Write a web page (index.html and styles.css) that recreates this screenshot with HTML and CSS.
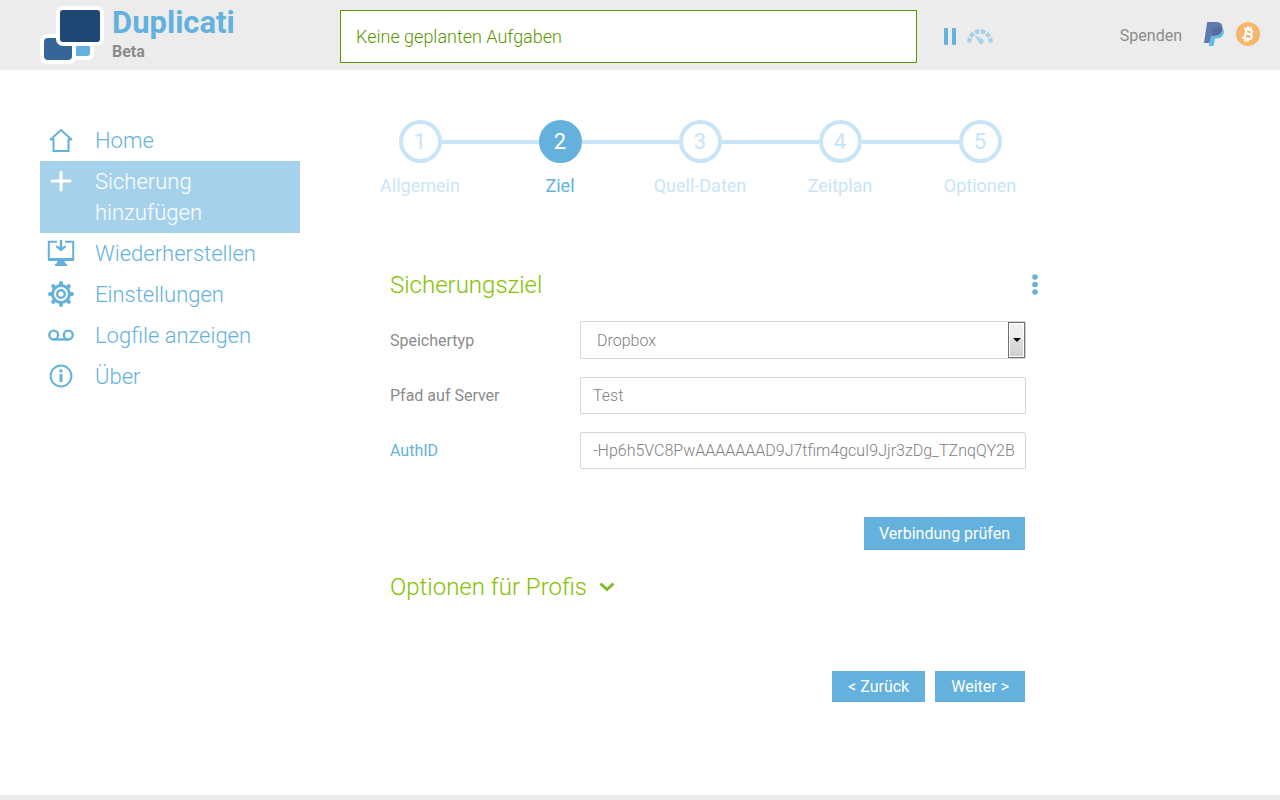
FILE: index.html
```html
<!DOCTYPE html>
<html lang="de">
<head>
<meta charset="utf-8">
<meta name="viewport" content="width=device-width, initial-scale=1">
<title>Duplicati</title>
<link rel="stylesheet" href="styles.css">
</head>
<body>
<header class="header">
  <a class="brand" href="#">
    <svg class="brand-logo" width="64" height="58" viewBox="0 0 64 58" aria-hidden="true">
      <rect x="28" y="30" width="26" height="24" rx="6" fill="#fff"/>
      <rect x="32" y="34" width="18" height="16" rx="3" fill="#65b1dd"/>
      <rect x="0" y="28" width="36" height="30" rx="7" fill="#fff"/>
      <rect x="4" y="32" width="28" height="22" rx="4" fill="#356697"/>
      <rect x="16" y="0" width="48" height="40" rx="7" fill="#fff"/>
      <rect x="20" y="4" width="40" height="32" rx="3" fill="#1e4773"/>
    </svg>
    <span class="brand-text">
      <span class="brand-name">Duplicati</span>
      <span class="brand-version">Beta</span>
    </span>
  </a>
  <div class="status">Keine geplanten Aufgaben</div>
  <div class="actions">
    <button class="icon-button" type="button" aria-label="Pause">
      <svg width="12" height="17" viewBox="0 0 12 17" fill="#65b1dd"><rect width="4" height="17" rx="1"/><rect x="8" width="4" height="17" rx="1"/></svg>
    </button>
    <button class="icon-button" type="button" aria-label="Drosseln">
      <svg width="26" height="15" viewBox="0 0 26 15">
        <path d="M2.300 13.500V13A10.700 10.700 0 0 1 23.700 13V13.500" fill="none" stroke="#a5d1eb" stroke-width="4.400" stroke-dasharray="4.500 1.520"/>
        <path d="M8 6.300 15.300 10A2.700 2.700 0 1 1 11.300 12.800z" fill="#a5d1eb"/>
      </svg>
    </button>
  </div>
  <div class="donate">
    <span class="donate-label">Spenden</span>
    <a class="icon-button" href="#" aria-label="PayPal">
      <svg width="20" height="24" viewBox="0 0 20 24">
        <path d="M17.500 5.500C20 7 20.500 10 19 13c-1.200 2.600-3.500 3.500-6.500 3.500H11L9.700 24H4.800L7 11z" fill="#62bde5"/>
        <path d="M3.200 0H12c5 0 7.200 2.900 6.200 7.300-1 4.500-3.700 6.300-7.700 6.300H7.200L5.300 21H0z" fill="#5f78ae"/>
        <path d="M8.500 5.700h8.700c.6.300 1 .6 1.100 1-.8 4.900-3.600 6.900-7.800 6.900H7.200z" fill="#5a6a9f"/>
      </svg>
    </a>
    <a class="icon-button" href="#" aria-label="Bitcoin">
      <svg width="24" height="24" viewBox="0 0 24 24">
        <circle cx="12" cy="12" r="12" fill="#f5b66e"/>
        <g transform="rotate(13 12 12)" fill="none" stroke="#fff" stroke-width="2">
          <path d="M7 7.500h5.500c4 0 4 4.300 0 4.300H9.500h3.500c4.500 0 4.500 4.900 0 4.900H7M9.500 7.500v9M10.500 4.500v3M13.300 4.500v3M10.500 16.700v3M13.300 16.700v3"/>
        </g>
      </svg>
    </a>
  </div>
</header>

<div class="page">
  <nav class="menu">
    <a class="menu-item" href="#">
      <svg class="menu-icon" viewBox="0 0 28 28" fill="none" stroke="#65b1dd" stroke-width="2"><path d="M3 14 14 4l11 10M3 13.500h3.500V25h15V13.500H25"/></svg>
      <span>Home</span>
    </a>
    <a class="menu-item active" href="#">
      <svg class="menu-icon" viewBox="0 0 28 28" fill="none" stroke="#fff" stroke-width="3" stroke-linecap="round"><path d="M14 5v18M5 14h18"/></svg>
      <span>Sicherung hinzufügen</span>
    </a>
    <a class="menu-item" href="#">
      <svg class="menu-icon" viewBox="0 0 28 28" fill="none" stroke="#65b1dd"><path d="M10 2.800H1.800V20h24.400V2.800H18" stroke-width="2"/><path d="M1 20.500h26" stroke-width="3"/><path d="M14 1v8" stroke-width="2.500"/><path d="M9 6.200 14 8.800l5-2.600v2l-5 4.300-5-4.300zM10.500 22h7l1 2.500 1.500.8V27H8v-1.700l1.500-.8z" fill="#65b1dd" stroke="none"/></svg>
      <span>Wiederherstellen</span>
    </a>
    <a class="menu-item" href="#">
      <svg class="menu-icon" viewBox="0 0 28 28" fill="none" stroke="#65b1dd"><circle cx="14" cy="14" r="8.500" stroke-width="3"/><circle cx="14" cy="14" r="3.800" stroke-width="2.400"/><path d="M14 3v2M14 23v2M3 14h2M23 14h2M6.200 6.200l1.400 1.400M20.400 20.400l1.400 1.400M6.200 21.800l1.400-1.400M20.400 7.600l1.400-1.400" stroke-width="4" stroke-linecap="round"/></svg>
      <span>Einstellungen</span>
    </a>
    <a class="menu-item" href="#">
      <svg class="menu-icon" viewBox="0 0 28 28" fill="none" stroke="#65b1dd" stroke-width="2.400"><circle cx="6.700" cy="14" r="4.400"/><circle cx="21.300" cy="14" r="4.400"/><path d="M6.700 18.500h14.600"/></svg>
      <span>Logfile anzeigen</span>
    </a>
    <a class="menu-item" href="#">
      <svg class="menu-icon" viewBox="0 0 28 28" fill="none" stroke="#65b1dd"><circle cx="14" cy="14" r="10.400" stroke-width="2"/><path d="M14 12v8M14 7.500v3" stroke-width="3"/></svg>
      <span>Über</span>
    </a>
  </nav>

  <main class="content">
    <ol class="steps">
      <li class="step"><span class="step-number">1</span><span>Allgemein</span></li>
      <li class="step current" aria-current="step"><span class="step-number">2</span><span>Ziel</span></li>
      <li class="step"><span class="step-number">3</span><span>Quell-Daten</span></li>
      <li class="step"><span class="step-number">4</span><span>Zeitplan</span></li>
      <li class="step"><span class="step-number">5</span><span>Optionen</span></li>
    </ol>

    <form class="form">
      <div class="form-head">
        <h1 class="heading">Sicherungsziel</h1>
        <button class="icon-button" type="button" aria-label="Menü">
          <svg width="6" height="22" viewBox="0 0 6 22" fill="#65b1dd"><circle cx="3" cy="3" r="2.800"/><circle cx="3" cy="10.500" r="2.800"/><circle cx="3" cy="18" r="2.800"/></svg>
        </button>
      </div>
      <div class="field">
        <label for="type">Speichertyp</label>
        <div class="select-box">
          <select class="control select" id="type"><option>Dropbox</option></select>
          <span class="select-arrow" aria-hidden="true"></span>
        </div>
      </div>
      <div class="field">
        <label for="path">Pfad auf Server</label>
        <input class="control" id="path" type="text" value="Test">
      </div>
      <div class="field">
        <label for="auth"><a class="link" href="#">AuthID</a></label>
        <input class="control" id="auth" type="text" value="-Hp6h5VC8PwAAAAAAAD9J7tfim4gcuI9Jjr3zDg_TZnqQY2B">
      </div>
      <div class="buttons test">
        <button class="button" type="button">Verbindung prüfen</button>
      </div>
      <h2 class="heading">
        <button class="expander" type="button" aria-expanded="false">Optionen für Profis
          <svg width="16" height="10" viewBox="0 0 16 10" fill="none" stroke="#7fb927" stroke-width="2.800"><path d="M1.500 1.500 8 7.500l6.500-6"/></svg>
        </button>
      </h2>
      <div class="buttons wizard">
        <button class="button" type="button">&lt; Zurück</button>
        <button class="button" type="submit">Weiter &gt;</button>
      </div>
    </form>
  </main>
</div>
<footer class="footer"></footer>
</body>
</html>
```
FILE: styles.css
```css
* {
  box-sizing: border-box;
}

body {
  margin: 0;
  min-height: 100vh;
  display: flex;
  flex-direction: column;
  background: #fff;
  color: #8b8b8b;
  font-family: "Clear Sans", Roboto, sans-serif;
  font-size: 16px;
}

a {
  color: inherit;
  text-decoration: none;
}

button,
input,
select {
  font: inherit;
}

.header {
  display: flex;
  align-items: flex-start;
  min-height: 70px;
  padding: 0 20px 0 40px;
  background: #ececec;
}

.brand {
  display: flex;
  gap: 8px;
  width: 300px;
  padding-top: 6px;
}

.brand-text {
  display: flex;
  flex-direction: column;
  font-weight: 700;
}

.brand-name {
  color: #65b1dd;
  font-size: 31px;
  line-height: 34px;
}

.brand-version {
  font-size: 16px;
  line-height: 24px;
}

.status {
  flex: 0 1 577px;
  margin-top: 10px;
  padding: 15px;
  border: 1px solid #5a9600;
  background: #fff;
  color: #5a9600;
  font-size: 18px;
  font-weight: 300;
  line-height: 21px;
}

.icon-button {
  display: flex;
  padding: 0;
  border: 0;
  background: none;
  cursor: pointer;
}

.actions {
  display: flex;
  align-items: center;
  gap: 11px;
  margin: 28px 0 0 27px;
}

.donate {
  display: flex;
  align-items: center;
  gap: 12px;
  margin: 22px 0 0 auto;
}

.donate-label {
  margin-right: 10px;
  padding-top: 2px;
}

.page {
  flex: 1;
  display: flex;
  gap: 50px;
  padding: 50px 40px 93px;
}

.menu {
  flex: 0 0 260px;
  min-width: 0;
  color: #65b1dd;
  font-size: 22px;
  font-weight: 300;
  line-height: 31px;
}

.menu-item {
  display: flex;
  align-items: flex-start;
  gap: 20px;
  padding: 5px 20px 5px 7px;
}

.menu-item.active {
  padding-right: 60px;
  background: #a5d1eb;
  color: #fff;
}

.menu-icon {
  flex: none;
  width: 28px;
  height: 28px;
  margin-top: 1px;
}

.content {
  flex: 0 1 700px;
  min-width: 0;
}

.steps {
  display: flex;
  margin: 0;
  padding: 0;
  list-style: none;
  color: #c8e5f7;
  font-size: 18px;
  line-height: 24px;
}

.step {
  flex: 1;
  display: grid;
  grid-template-columns: 1fr 43px 1fr;
  align-items: center;
  row-gap: 11px;
  text-align: center;
}

.step::before,
.step::after {
  content: "";
  grid-row: 1;
  height: 4px;
  background: #c8e5f7;
}

.step::before {
  grid-column: 1;
}

.step::after {
  grid-column: 3;
}

.step:first-child::before,
.step:last-child::after {
  background: none;
}

.step-number {
  grid-row: 1;
  grid-column: 2;
  height: 43px;
  border: 4px solid #c8e5f7;
  border-radius: 50%;
  font-size: 22px;
  line-height: 35px;
}

.step-number + span {
  grid-row: 2;
  grid-column: 1 / -1;
}

.step.current {
  color: #65b1dd;
}

.current .step-number {
  border-color: #65b1dd;
  background: #65b1dd;
  color: #fff;
}

.form {
  margin: 70px 24px 0 40px;
}

.form-head {
  display: flex;
  align-items: center;
  justify-content: space-between;
  margin: 0 -12px 19px 0;
}

.heading {
  margin: 0;
  color: #84c100;
  font-size: 24px;
  font-weight: 300;
  line-height: 34px;
}

.field {
  display: grid;
  grid-template-columns: 190px 1fr;
  align-items: center;
  margin-bottom: 18px;
}

.link {
  color: #65b1dd;
}

.select-box {
  position: relative;
}

.control {
  display: block;
  width: 100%;
  height: 37px;
  padding: 0 8px 0 12px;
  border: 1px solid #d5d5d5;
  border-radius: 2px;
  background: #fff;
  color: #808080;
  font-weight: 300;
}

.select {
  height: 38px;
  padding: 0 30px 0 16px;
  appearance: none;
}

.select-arrow {
  position: absolute;
  top: 1px;
  right: 1px;
  bottom: 1px;
  width: 17px;
  border: 1px solid #707070;
  background: linear-gradient(#f2f2f2, #ebebeb 50%, #dddddd 50%, #cfcfcf);
  box-shadow: inset 0 0 0 1px #fcfcfc;
  pointer-events: none;
}

.select-arrow::after {
  content: "";
  position: absolute;
  top: 15px;
  left: 4px;
  border: 4px solid transparent;
  border-top-color: #000;
  border-bottom: 0;
}

.buttons {
  display: flex;
  justify-content: flex-end;
  gap: 10px;
  margin-right: 1px;
}

.test {
  margin-top: 48px;
  margin-bottom: 20px;
}

.wizard {
  margin-top: 67px;
}

.button {
  padding: 0 15px;
  border: 0;
  background: #65b1dd;
  color: #fff;
  line-height: 33px;
}

.wizard .button {
  padding: 0 16px;
  line-height: 31px;
}

.expander {
  display: flex;
  align-items: center;
  gap: 12px;
  padding: 0;
  border: 0;
  background: none;
  color: inherit;
}

.footer {
  height: 5px;
  background: #ececec;
}
```
